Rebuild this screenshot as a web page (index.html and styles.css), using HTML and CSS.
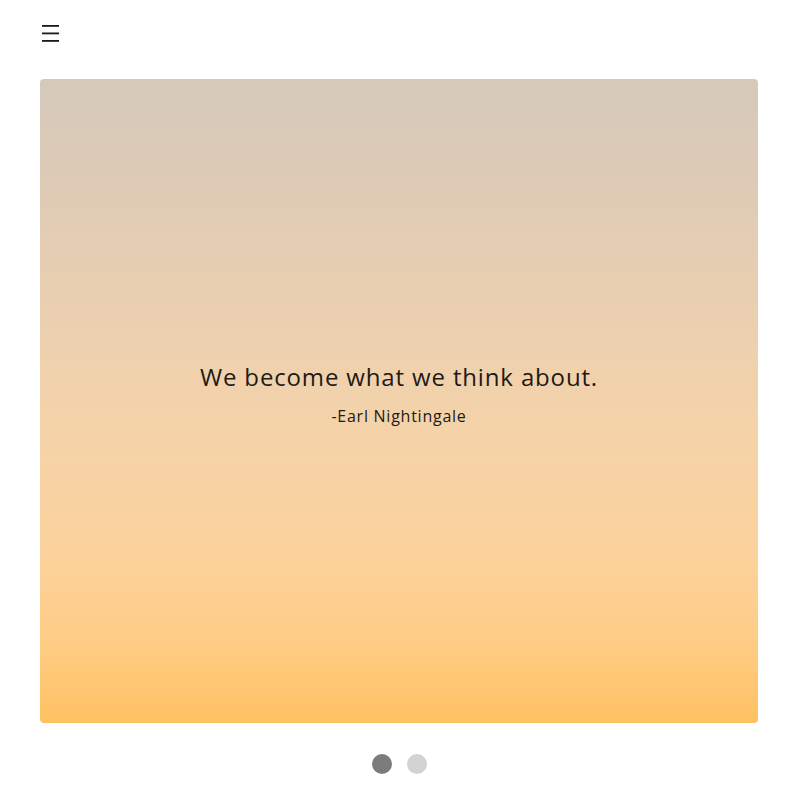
FILE: index.html
```html
<!DOCTYPE html>
<html lang="en">
<head>
<meta charset="utf-8">
<title>Quotes</title>
<link rel="stylesheet" href="styles.css">
</head>
<body>
<div class="page">
  <header class="topbar">
    <button class="menu-btn" aria-label="Menu">
      <svg width="18" height="17" viewBox="0 0 18 17" aria-hidden="true">
        <rect x="0" y="0" width="17" height="1.8" fill="#1a1a1a"/>
        <rect x="0" y="7.5" width="17" height="1.8" fill="#1a1a1a"/>
        <rect x="0" y="15" width="17" height="1.8" fill="#1a1a1a"/>
      </svg>
    </button>
  </header>
  <main class="slide">
    <div class="quote-block">
      <p class="quote">We become what we think about.</p>
      <p class="author">-Earl Nightingale</p>
    </div>
  </main>
  <nav class="dots">
    <span class="dot active"></span>
    <span class="dot"></span>
  </nav>
</div>
</body>
</html>
```
FILE: styles.css
```css
html, body {
  margin: 0;
  padding: 0;
  background: #ffffff;
}
body {
  font-family: "Open Sans", "Noto Sans", sans-serif;
  color: #1e1a16;
}
.page {
  padding: 0 40px;
  display: flex;
  flex-direction: column;
}
.topbar {
  height: 79px;
  display: flex;
  align-items: flex-start;
}
.menu-btn {
  margin: 25px 0 0 2px;
  padding: 0;
  border: 0;
  background: none;
  display: flex;
  cursor: pointer;
}
.slide {
  height: 644px;
  border-radius: 4px;
  background: linear-gradient(180deg,
    #d5c9ba 0%,
    #dfcbb5 18%,
    #ebd0b0 38%,
    #f6d3a8 56%,
    #fcd29c 74%,
    #fecc84 88%,
    #fec262 100%);
  display: flex;
  align-items: center;
  justify-content: center;
}
.quote-block {
  text-align: center;
  margin-top: -16px;
}
.quote {
  margin: 0;
  font-size: 24px;
  letter-spacing: 0.85px;
  line-height: 32px;
}
.author {
  margin: 13px 0 0;
  font-size: 16px;
  letter-spacing: 0.75px;
  line-height: 20px;
}
.dots {
  margin-top: 31px;
  display: flex;
  justify-content: center;
  gap: 15px;
}
.dot {
  width: 20px;
  height: 20px;
  border-radius: 50%;
  background: #d2d2d2;
}
.dot.active {
  background: #7c7c7c;
}
```
